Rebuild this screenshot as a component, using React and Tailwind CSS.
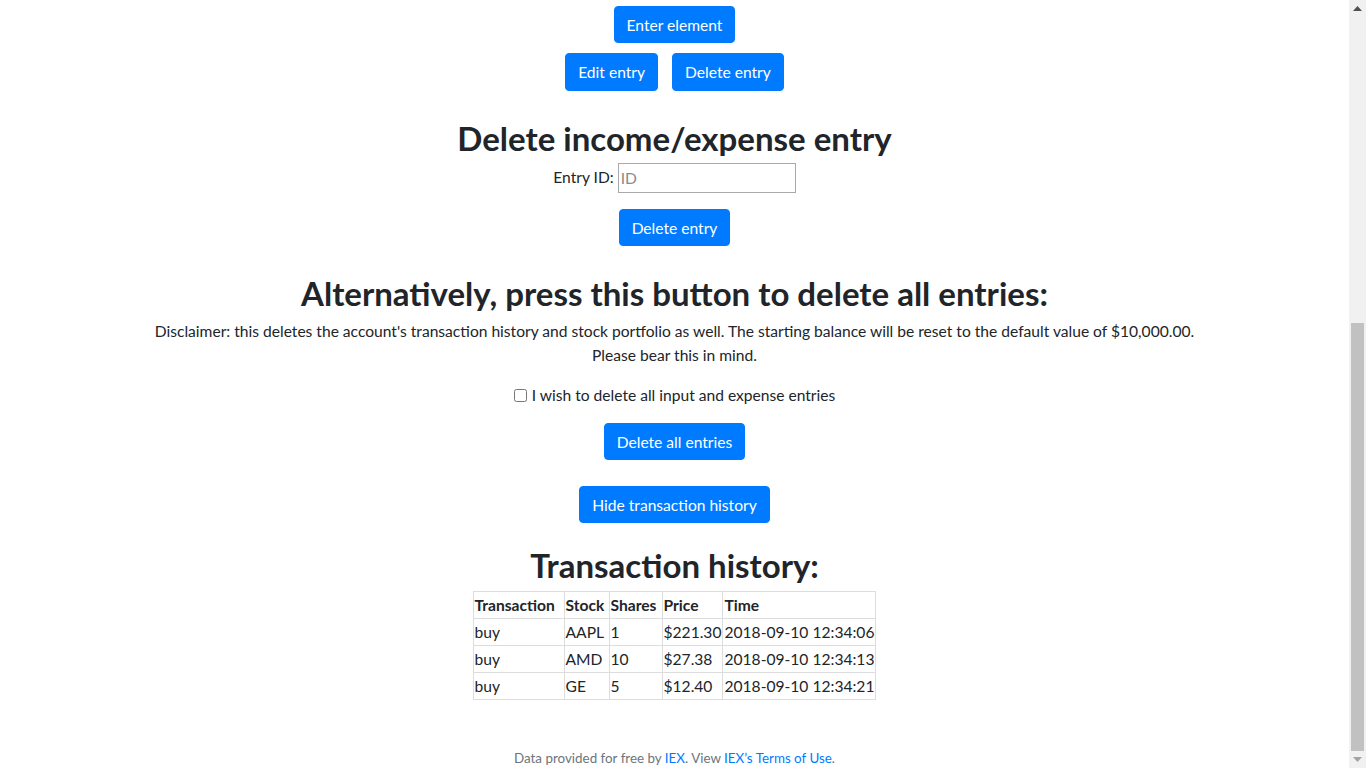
import { useState } from "react";

const rows = [
  { type: "buy", stock: "AAPL", shares: "1", price: "$221.30", time: "2018-09-10 12:34:06" },
  { type: "buy", stock: "AMD", shares: "10", price: "$27.38", time: "2018-09-10 12:34:13" },
  { type: "buy", stock: "GE", shares: "5", price: "$12.40", time: "2018-09-10 12:34:21" },
];

function Btn({ children, className = "" }) {
  return (
    <button
      type="button"
      className={`h-[38px] px-[12px] rounded-[4px] bg-[#007bff] text-white text-[15.6px] leading-[24px] border border-[#007bff] whitespace-nowrap ${className}`}
    >
      {children}
    </button>
  );
}

function Heading({ children, className = "" }) {
  return (
    <h2 className={`text-[33px] leading-[38px] font-bold text-[#212529] ${className}`}>{children}</h2>
  );
}

export default function App() {
  const [checked, setChecked] = useState(false);
  const [entryId, setEntryId] = useState("");

  return (
    <div
      className="flex h-screen overflow-hidden bg-white text-[#212529]"
      style={{ fontFamily: "Lato, 'Open Sans', sans-serif" }}
    >
      <main className="flex-1 flex flex-col items-center text-center text-[15.6px]">
        <Btn className="mt-[6px]">Enter element</Btn>

        <div className="mt-[10px] flex gap-[14px]">
          <Btn>Edit entry</Btn>
          <Btn>Delete entry</Btn>
        </div>

        <Heading className="mt-[28px]">Delete income/expense entry</Heading>

        <div className="mt-[6px] flex items-center gap-[4px] h-[30px]">
          <label htmlFor="entry-id">Entry ID:</label>
          <input
            id="entry-id"
            value={entryId}
            onChange={(e) => setEntryId(e.target.value)}
            placeholder="ID"
            className="w-[178px] h-[30px] border border-[#a9a9a9] px-[2px] text-[15.6px] outline-none placeholder:text-[#8a8a8a]"
          />
        </div>

        <Btn className="mt-[16px]">Delete entry</Btn>

        <Heading className="mt-[28px]">Alternatively, press this button to delete all entries:</Heading>

        <p className="mt-[7px] leading-[24px]">
          Disclaimer: this deletes the account's transaction history and stock portfolio as well. The starting
          balance will be reset to the default value of $10,000.00.
          <br />
          Please bear this in mind.
        </p>

        <label className="mt-[16px] flex items-center gap-[5px] leading-[24px]">
          <input
            type="checkbox"
            checked={checked}
            onChange={(e) => setChecked(e.target.checked)}
            className="w-[13px] h-[13px] m-0"
          />
          I wish to delete all input and expense entries
        </label>

        <Btn className="mt-[16px]">Delete all entries</Btn>

        <Btn className="mt-[26px]">Hide transaction history</Btn>

        <Heading className="mt-[23px]">Transaction history:</Heading>

        <table className="mt-[7px] border-collapse text-left text-[15.6px]">
          <thead>
            <tr className="h-[27px]">
              <th className="w-[91px] border border-[#dddddd] px-[1px] pt-[1px] font-bold">Transaction</th>
              <th className="w-[45px] border border-[#dddddd] px-[1px] pt-[1px] font-bold">Stock</th>
              <th className="w-[53px] border border-[#dddddd] px-[1px] pt-[1px] font-bold">Shares</th>
              <th className="w-[60px] border border-[#dddddd] px-[1px] pt-[1px] font-bold">Price</th>
              <th className="w-[152px] border border-[#dddddd] px-[1px] pt-[1px] font-bold">Time</th>
            </tr>
          </thead>
          <tbody>
            {rows.map((r) => (
              <tr key={r.time} className="h-[27px]">
                <td className="border border-[#dddddd] px-[1px] pt-[1px]">{r.type}</td>
                <td className="border border-[#dddddd] px-[1px] pt-[1px]">{r.stock}</td>
                <td className="border border-[#dddddd] px-[1px] pt-[1px]">{r.shares}</td>
                <td className="border border-[#dddddd] px-[1px] pt-[1px]">{r.price}</td>
                <td className="border border-[#dddddd] px-[1px] pt-[1px] whitespace-nowrap">{r.time}</td>
              </tr>
            ))}
          </tbody>
        </table>

        <footer className="mt-[48px] text-[13.4px] leading-[20px] text-[#6c757d]">
          Data provided for free by <a className="text-[#007bff]">IEX</a>. View{" "}
          <a className="text-[#007bff]">IEX’s Terms of Use</a>.
        </footer>
      </main>

      {/* fake scrollbar, page is scrolled to the bottom */}
      <aside className="w-[17px] h-screen bg-[#f1f1f1] flex flex-col items-center">
        <div className="h-[17px] flex items-center justify-center">
          <svg width="9" height="5" viewBox="0 0 9 5">
            <path d="M0 5 L4.5 0 L9 5 Z" fill="#505050" />
          </svg>
        </div>
        <div className="flex-1 w-full flex flex-col justify-end px-[2px]">
          <div className="h-[428px] w-full bg-[#c1c1c1]" />
        </div>
        <div className="h-[17px] flex items-center justify-center">
          <svg width="9" height="5" viewBox="0 0 9 5">
            <path d="M0 0 L4.5 5 L9 0 Z" fill="#a3a3a3" />
          </svg>
        </div>
      </aside>
    </div>
  );
}
